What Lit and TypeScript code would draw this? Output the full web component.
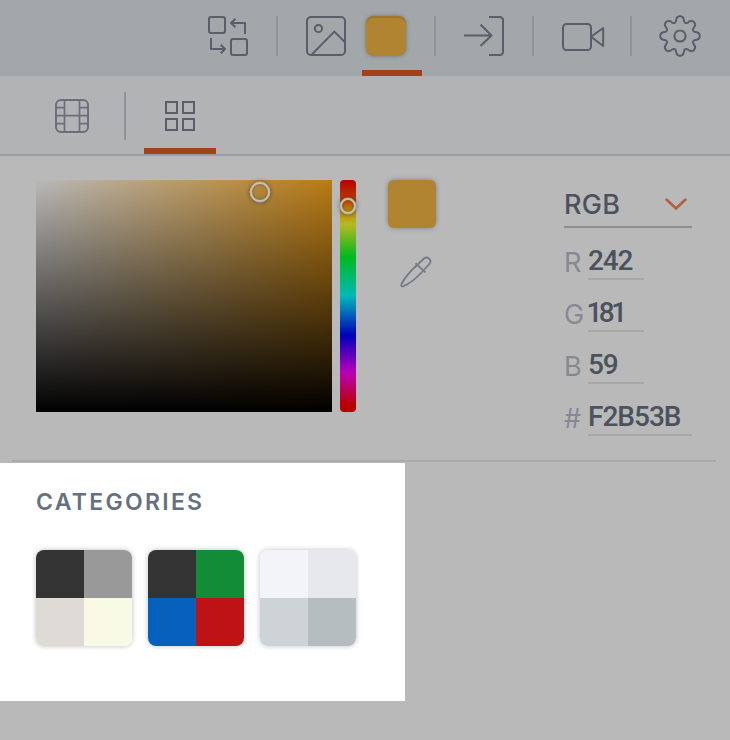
import { LitElement, html, css, svg } from "lit";
import { customElement } from "lit/decorators.js";
import { styleMap } from "lit/directives/style-map.js";

// Outline of an eight-toothed gear centred on (22, 20).
function gearPath(): string {
  const at = (x: number, y: number, k: number) => {
    const a = (k * Math.PI) / 4;
    const px = 22 + x * Math.cos(a) - y * Math.sin(a);
    const py = 20 + x * Math.sin(a) + y * Math.cos(a);
    return `${px.toFixed(2)} ${py.toFixed(2)}`;
  };
  let d = `M${at(-3.7, -16.6, 0)}`;
  for (let k = 0; k < 8; k++) {
    d += `A3.75 3.75 0 0 1 ${at(3.7, -16.6, k)}`;
    d += `C${at(4.1, -12.6, k)} ${at(-4.1, -12.6, k + 1)} ${at(-3.7, -16.6, k + 1)}`;
  }
  return d + "Z";
}

const icons = {
  swap: svg`<rect x="1" y="1" width="16" height="16" rx="2"/><rect x="23" y="23" width="16" height="16" rx="2"/>
    <path d="M37 18V7H23M27.5 2.8L23 7l4.5 4.3M3 22v11h14M12.7 28.8L17 33l-4.3 4.3"/>`,
  image: svg`<rect x="1" y="1" width="38" height="38" rx="4"/><circle cx="12.5" cy="12.5" r="3.6"/>
    <path d="M5.8 38.5L28.3 15.6 39 26.3"/>`,
  enter: svg`<path d="M0 19.5h27.5M16.5 8.5l11 11-11 10.5M25 1h10.5q3.5 0 3.5 3.5v31q0 3.5-3.5 3.5H25"/>`,
  camera: svg`<rect x="1" y="8" width="28" height="26" rx="3.5"/><path d="M29 20.8L41.2 12v18z"/>`,
  gear: svg`<path d=${gearPath()}/><circle cx="22" cy="20" r="5.6"/>`,
};

interface Channel { label: string; value: string; kind?: string }

const channels: Channel[] = [
  { label: "R", value: "242" },
  { label: "G", value: "181", kind: "tight" },
  { label: "B", value: "59" },
  { label: "#", value: "F2B53B", kind: "wide" },
];

const palettes = [
  ["#333333", "#999999", "#dedad6", "#f8fae6"],
  ["#333333", "#128c36", "#0661bc", "#bf1216"],
  ["#f3f4fa", "#e7e8ee", "#ced3d7", "#b6bdc0"],
];

@customElement("app-root")
export class AppRoot extends LitElement {
  static styles = css`
    :host { display: block; width: 730px; height: 740px; overflow: hidden; background: #b9b9b9; font-family: Inter, "Liberation Sans", sans-serif; color: #4a525e; }
    * { box-sizing: border-box; }
    svg { display: block; fill: none; stroke: #5a5e69; stroke-width: 2; stroke-linejoin: round; stroke-linecap: butt; flex: none; overflow: visible; }
    .toolbar { display: flex; height: 76px; padding: 16px 0 0 208px; background: #a2a8aa; }
    .bar { width: 2px; height: 40px; margin: 0 28px; background: #929397; flex: none; }
    .bar.before-gear { margin: 0 26px 0 24px; }
    .bar.after-tab { margin-left: 12px; }
    .color-tab { width: 60px; height: 60px; margin-left: 16px; padding-left: 4px; border-bottom: 6px solid #a2421b; flex: none; }
    .chip { width: 40px; height: 40px; border-radius: 8px; background: #b08431; box-shadow: 0 0 4px rgba(0,0,0,.32), inset 0 2px 0 #9e762c; }
    .tabs { display: flex; height: 80px; padding-left: 32px; background: #b2b3b5; border-bottom: 2px solid #9b9ea2; }
    .tab { display: flex; justify-content: center; width: 72px; height: 78px; border-bottom: 6px solid transparent; }
    .tab.film { width: 80px; padding-top: 23px; }
    .tab.grid { padding-top: 25px; border-color: #a2421b; }
    .film svg { stroke: #6c6f7a; }
    .film .lines { stroke-width: 1.7; }
    .grid svg { stroke-linejoin: miter; }
    .tabs .bar { height: 48px; margin: 16px 18px 0 12px; }
    .picker { display: flex; height: 306px; margin-left: 12px; margin-right: 14px; padding: 24px 24px 0; border-bottom: 2px solid #aaaaab; }
    .field { position: relative; width: 296px; height: 232px; border-top-left-radius: 4px; background: linear-gradient(to top, #000, rgba(0,0,0,0)), linear-gradient(to right, #b9b9b9, #b97b14); }
    .hue { position: relative; width: 16px; height: 232px; margin-left: 8px; border-radius: 4px; background: linear-gradient(#b90000 0%, #b93a00 8%, #b98e10 14%, #b9b920 19%, #00b91c 33%, #00b9b9 50%, #0000b9 67%, #b900b9 83%, #b90000 97%); }
    .knob { position: absolute; border: 2px solid #c0c0c0; border-radius: 50%; box-shadow: 0 0 0 .4px #b9b9b9, 0 0 5px rgba(0,0,0,.5), inset 0 0 3px rgba(0,0,0,.3); }
    .field .knob { left: 214px; top: 2px; width: 20px; height: 20px; }
    .hue .knob { left: 0; top: 18px; width: 16px; height: 16px; }
    .sample { width: 48px; margin-left: 32px; }
    .sample .chip { width: 48px; height: 48px; border-radius: 6px; box-shadow: 0 0 5px rgba(0,0,0,.3); }
    .sample svg { margin: 27px 0 0 12px; stroke: #737b86; stroke-width: 1.8; }
    .values { width: 128px; margin-left: 128px; }
    .mode { display: flex; align-items: center; justify-content: space-between; height: 48px; padding-top: 3px; border-bottom: 2px solid #8e8e95; font-size: 27px; font-weight: 450; letter-spacing: .3px; line-height: 44px; }
    .mode svg { stroke: #b05e3b; stroke-width: 2.5; stroke-linecap: round; margin: 0 5px 1px 0; }
    .row { display: flex; height: 52px; padding-top: 16px; }
    .label { width: 24px; padding-top: 1px; font-size: 27px; line-height: 36px; color: #868995; }
    .value { width: 56px; height: 36px; border-bottom: 2px solid #a7a7a8; font: 500 28px/34px Roboto, "Liberation Sans", sans-serif; letter-spacing: -1.2px; white-space: nowrap; }
    .value.tight { letter-spacing: -3.6px; text-indent: -1.5px; }
    .value.wide { width: 104px; letter-spacing: -1px; }
    .categories { width: 405px; height: 238px; margin-top: 1px; padding: 25px 0 0 36px; background: #fff; }
    h2 { margin: 0; font-size: 23px; font-weight: 600; line-height: 28px; letter-spacing: 2.3px; color: #657080; }
    .palettes { display: flex; gap: 16px; margin-top: 34px; }
    .palette { display: grid; grid-template-columns: 48px 48px; grid-auto-rows: 48px; border-radius: 8px; overflow: hidden; box-shadow: 0 0 4px 1px rgba(0,0,0,.18); }
  `;

  private icon(name: keyof typeof icons, width = 40) {
    return html`<svg width=${width} height="40" viewBox="0 0 ${width} 40">${icons[name]}</svg>`;
  }

  render() {
    return html`
      <header class="toolbar">
        ${this.icon("swap")}<span class="bar"></span>
        ${this.icon("image")}
        <div class="color-tab"><div class="chip"></div></div>
        <span class="bar after-tab"></span>
        ${this.icon("enter")}<span class="bar"></span>
        ${this.icon("camera", 44)}<span class="bar before-gear"></span>
        ${this.icon("gear", 44)}
      </header>
      <nav class="tabs">
        <div class="tab film">
          <svg width="34" height="34" viewBox="0 0 34 34"><rect x="1" y="1" width="32" height="32" rx="5"/><path class="lines" d="M9.5 1v32M24.5 1v32M1 16.7h32M1 8.7h8.5M24.5 8.7H33M1 24.7h8.5M24.5 24.7H33"/></svg>
        </div>
        <span class="bar"></span>
        <div class="tab grid">
          <svg width="30" height="30" viewBox="0 0 30 30"><path d="M1 1h11v11H1zM18 1h11v11H18zM1 18h11v11H1zM18 18h11v11H18z"/></svg>
        </div>
      </nav>
      <section class="picker">
        <div class="field"><span class="knob"></span></div>
        <div class="hue"><span class="knob"></span></div>
        <div class="sample">
          <div class="chip"></div>
          <svg width="32" height="32" viewBox="0 0 32 32"><path d="M17 10L24 3.5C27.500 .8 32.500 5 29.500 8.900L23 16C17 22.500 9 29 3.500 31.200C1.500 32 .8 30.500 1.500 29C5 22 10 16.500 17 10zM15.500 8.300l10 9"/></svg>
        </div>
        <div class="values">
          <div class="mode"><span>RGB</span><svg width="22" height="12" viewBox="0 0 22 12"><path d="M1.500 1.500L11 10.500l9.500-9"/></svg></div>
          ${channels.map((c) => html`<div class="row"><span class="label">${c.label}</span><span class="value ${c.kind ?? ""}">${c.value}</span></div>`)}
        </div>
      </section>
      <section class="categories">
        <h2>CATEGORIES</h2>
        <div class="palettes">
          ${palettes.map((p) => html`<div class="palette">${p.map((c) => html`<span style=${styleMap({ background: c })}></span>`)}</div>`)}
        </div>
      </section>
    `;
  }
}
